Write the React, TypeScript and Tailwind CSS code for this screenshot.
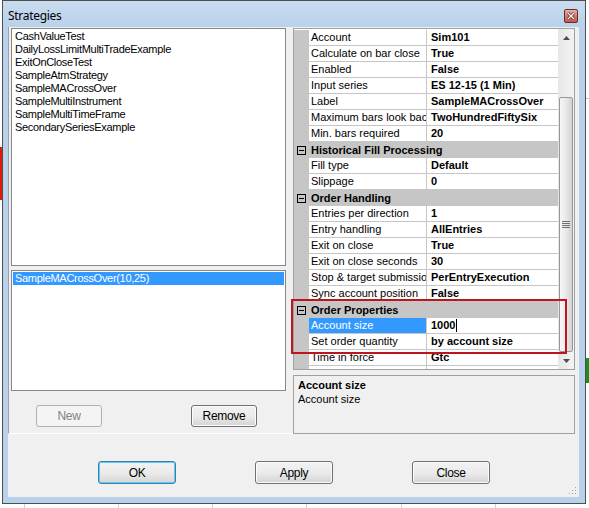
import React from "react";

type Row = { n?: string; v?: string; c?: string; sel?: boolean };

const rows: Row[] = [
  { n: "Account", v: "Sim101" },
  { n: "Calculate on bar close", v: "True" },
  { n: "Enabled", v: "False" },
  { n: "Input series", v: "ES 12-15 (1 Min)" },
  { n: "Label", v: "SampleMACrossOver" },
  { n: "Maximum bars look back", v: "TwoHundredFiftySix" },
  { n: "Min. bars required", v: "20" },
  { c: "Historical Fill Processing" },
  { n: "Fill type", v: "Default" },
  { n: "Slippage", v: "0" },
  { c: "Order Handling" },
  { n: "Entries per direction", v: "1" },
  { n: "Entry handling", v: "AllEntries" },
  { n: "Exit on close", v: "True" },
  { n: "Exit on close seconds", v: "30" },
  { n: "Stop & target submission", v: "PerEntryExecution" },
  { n: "Sync account position", v: "False" },
  { c: "Order Properties" },
  { n: "Account size", v: "1000", sel: true },
  { n: "Set order quantity", v: "by account size" },
  { n: "Time in force", v: "Gtc" },
  { n: "", v: "" },
];

const strategies = [
  "CashValueTest",
  "DailyLossLimitMultiTradeExample",
  "ExitOnCloseTest",
  "SampleAtmStrategy",
  "SampleMACrossOver",
  "SampleMultiInstrument",
  "SampleMultiTimeFrame",
  "SecondarySeriesExample",
];

function Minus() {
  return (
    <svg width="9" height="9" viewBox="0 0 9 9" className="block">
      <rect x="0.5" y="0.5" width="8" height="8" fill="none" stroke="#000" />
      <line x1="2" y1="4.5" x2="7" y2="4.5" stroke="#000" />
    </svg>
  );
}

function WinButton({
  label,
  w,
  h,
  variant = "normal",
  className = "",
}: {
  label: string;
  w: string;
  h: string;
  variant?: "normal" | "default" | "disabled";
  className?: string;
}) {
  const base =
    "flex items-center justify-center rounded-[3px] border text-[12px] tracking-[-0.3px] leading-none";
  if (variant === "disabled")
    return (
      <div className={`${base} ${w} ${h} ${className} border-[#adb2b5] bg-[#f4f4f4] text-[#838383]`}>
        {label}
      </div>
    );
  if (variant === "default")
    return (
      <div
        className={`${base} ${w} ${h} ${className} border-[#3c7fb1] bg-gradient-to-b from-[#f2f2f2] via-[#ebebeb] to-[#d6d6d6] text-black shadow-[inset_0_0_0_1px_#5fc8f4]`}
      >
        {label}
      </div>
    );
  return (
    <div
      className={`${base} ${w} ${h} ${className} border-[#707070] bg-gradient-to-b from-[#f2f2f2] via-[#ebebeb] to-[#d4d4d4] text-black shadow-[inset_0_0_0_1px_#fcfcfc]`}
    >
      {label}
    </div>
  );
}

export default function App() {
  return (
    <div className="relative h-[508px] w-[589px] overflow-hidden bg-white font-['Liberation_Sans',Arial,sans-serif] text-[11px] text-black">
      <div className="flex h-[504px]">
        {/* outside strip left */}
        <div className="flex w-[2px] flex-col">
          <div className="h-[147px]" />
          <div className="h-[53px] bg-[#e3170a]" />
        </div>

        {/* window */}
        <div className="flex w-[584px] flex-col border border-[#4e4e4e] bg-[#b9d1ea]">
          {/* title bar */}
          <div className="flex h-[26px] items-center justify-between bg-gradient-to-b from-[#c9dcf0] to-[#b9d1ea] pl-[5px] pr-[7px] pt-[3px]">
            <span className="font-['Noto_Sans',sans-serif] text-[12px] tracking-[-0.3px] text-black">
              Strategies
            </span>
            <svg width="14" height="14" viewBox="0 0 14 14" className="block">
              <defs>
                <linearGradient id="cg" x1="0" y1="0" x2="0" y2="1">
                  <stop offset="0" stopColor="#e8b3ad" />
                  <stop offset="0.5" stopColor="#d57a70" />
                  <stop offset="1" stopColor="#c4554a" />
                </linearGradient>
              </defs>
              <rect x="0.5" y="0.5" width="13" height="13" rx="1.5" fill="url(#cg)" stroke="#6d2b27" />
              <path d="M4 4 L10 10 M10 4 L4 10" stroke="#4a1a16" strokeWidth="2.6" />
              <path d="M4 4 L10 10 M10 4 L4 10" stroke="#ffffff" strokeWidth="1.4" />
            </svg>
          </div>

          {/* client */}
          <div className="mx-[5px] flex h-[470px] w-[571px] flex-col bg-[#f0f0f0]">
            <div className="flex h-[407px]">
              {/* left panel */}
              <div className="flex w-[285px] flex-col border-b border-l border-b-white border-l-[#a0a0a0] pl-[2px] pt-[1px]">
                <div className="h-[238px] w-[275px] border border-[#828790] bg-white pl-[3px] pt-[1px] tracking-[-0.3px] leading-[13px]">
                  {strategies.map((s) => (
                    <div key={s} className="h-[13px] whitespace-nowrap">
                      {s}
                    </div>
                  ))}
                </div>
                <div className="mt-[4px] h-[121px] w-[275px] border border-[#828790] bg-white px-[1px] pt-[1px]">
                  <div className="h-[13px] bg-[#3399ff] pl-[2px] leading-[13px] tracking-[-0.3px] text-white">
                    SampleMACrossOver(10,25)
                  </div>
                </div>
                <div className="mt-[14px] flex">
                  <WinButton label="New" w="w-[66px]" h="h-[22px]" variant="disabled" className="ml-[25px]" />
                  <WinButton label="Remove" w="w-[66px]" h="h-[22px]" className="ml-[89px]" />
                </div>
              </div>

              {/* right pane */}
              <div className="flex w-[282px] flex-col pt-[1px]">
                <div className="flex h-[342px] border border-[#a0a0a0] bg-white">
                  <div className="flex w-[264px] flex-col overflow-hidden pt-[1px]">
                    {rows.map((r, i) =>
                      r.c ? (
                        <div key={i} className="flex h-[16px] shrink-0 items-center bg-[#c6c6c6]">
                          <div className="ml-[3px] mr-[5px]">
                            <Minus />
                          </div>
                          <span className="font-bold">{r.c}</span>
                        </div>
                      ) : (
                        <div key={i} className="flex h-[16px] shrink-0">
                          <div className="w-[15px] bg-[#c6c6c6]" />
                          <div
                            className={`flex h-[16px] w-[118px] items-center overflow-hidden whitespace-nowrap border-b border-r border-[#c6c6c6] pl-[2px] ${
                              r.sel ? "bg-[#3399ff] text-white" : ""
                            }`}
                          >
                            {r.n}
                          </div>
                          <div className="flex h-[16px] flex-1 items-center overflow-hidden whitespace-nowrap border-b border-[#c6c6c6] pl-[4px] font-bold">
                            {r.v}
                            {r.sel && <span className="ml-[1px] inline-block h-[13px] w-[1px] bg-black" />}
                          </div>
                        </div>
                      )
                    )}
                  </div>
                  {/* scrollbar */}
                  <div className="flex w-[16px] flex-col bg-gradient-to-r from-[#e6e6e6] to-[#f3f3f3]">
                    <div className="flex h-[17px] items-center justify-center">
                      <svg width="7" height="4" viewBox="0 0 7 4">
                        <polygon points="0,4 3.5,0 7,4" fill="#4d4d4d" />
                      </svg>
                    </div>
                    <div className="h-[51px]" />
                    <div className="mx-[1px] flex h-[255px] items-center justify-center rounded-[2px] border border-[#979797] bg-gradient-to-r from-[#f7f7f7] via-[#e9e9e9] to-[#d2d2d2]">
                      <svg width="8" height="8" viewBox="0 0 8 8">
                        <line x1="0" y1="0.5" x2="8" y2="0.5" stroke="#707070" />
                        <line x1="0" y1="2.5" x2="8" y2="2.5" stroke="#707070" />
                        <line x1="0" y1="4.5" x2="8" y2="4.5" stroke="#707070" />
                        <line x1="0" y1="6.5" x2="8" y2="6.5" stroke="#707070" />
                      </svg>
                    </div>
                    <div className="flex h-[17px] items-center justify-center">
                      <svg width="7" height="4" viewBox="0 0 7 4">
                        <polygon points="0,0 3.5,4 7,0" fill="#4d4d4d" />
                      </svg>
                    </div>
                  </div>
                </div>
                <div className="mt-[5px] h-[59px] border border-[#a0a0a0] bg-[#f0f0f0] pl-[4px] pt-[2px] leading-[14px]">
                  <div className="font-bold">Account size</div>
                  <div>Account size</div>
                </div>
              </div>
            </div>

            {/* bottom buttons */}
            <div className="mt-[27px] flex">
              <WinButton label="OK" w="w-[78px]" h="h-[23px]" variant="default" className="ml-[90px]" />
              <WinButton label="Apply" w="w-[78px]" h="h-[23px]" className="ml-[79px]" />
              <WinButton label="Close" w="w-[78px]" h="h-[23px]" className="ml-[79px]" />
            </div>
            <div className="flex flex-1 items-end justify-end pb-[2px] pr-[2px]">
              <svg width="8" height="8" viewBox="0 0 8 8">
                <rect x="6" y="0" width="1" height="1" fill="#a0a0a0" />
                <rect x="3" y="3" width="1" height="1" fill="#a0a0a0" />
                <rect x="6" y="3" width="1" height="1" fill="#a0a0a0" />
                <rect x="0" y="6" width="1" height="1" fill="#a0a0a0" />
                <rect x="3" y="6" width="1" height="1" fill="#a0a0a0" />
                <rect x="6" y="6" width="1" height="1" fill="#a0a0a0" />
              </svg>
            </div>
          </div>
          <div className="flex-1" />
        </div>

        {/* outside strip right */}
        <div className="flex w-[3px] flex-col">
          <div className="h-[98px]" />
          <div className="h-[1px] bg-[#c8c8c8]" />
          <div className="h-[259px]" />
          <div className="h-[25px] bg-[#1c8c1c]" />
        </div>
      </div>

      {/* strip below window */}
      <div className="flex h-[4px]">
        <div className="w-[25px]" />
        {[0, 1, 2, 3, 4, 5].map((i) => (
          <div key={i} className="h-full w-[100px] border-l border-[#d0d0d0]" />
        ))}
      </div>

      {/* red annotation rectangle */}
      <div className="pointer-events-none absolute left-[291px] top-[299px] h-[55px] w-[276px] border-2 border-[#c0141c]" />
    </div>
  );
}
